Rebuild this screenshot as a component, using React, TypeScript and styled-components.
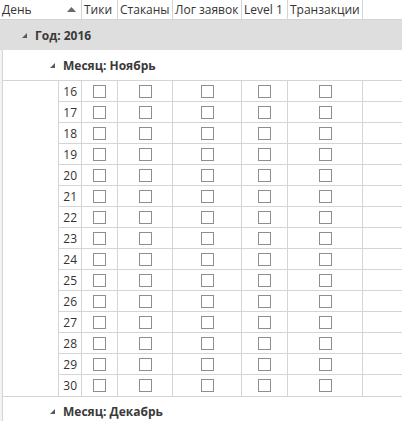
import React from 'react';
import styled, { createGlobalStyle } from 'styled-components';

const GlobalStyle = createGlobalStyle`
    html, body {
        margin: 0;
        padding: 0;
        background: #ffffff;
    }
    body {
        font-family: 'Open Sans', 'Noto Sans', sans-serif;
        font-size: 12px;
        color: #333333;
    }
`;

const LINE = '#d5d5d5';

const columns = [
    { title: 'День', width: 82, sorted: true },
    { title: 'Тики', width: 36 },
    { title: 'Стаканы', width: 55 },
    { title: 'Лог заявок', width: 69 },
    { title: 'Level 1', width: 46 },
    { title: 'Транзакции', width: 75 },
];

const Grid = styled.div`
    width: 402px;
    height: 421px;
    overflow: hidden;
    background: #fff;
`;

const HeaderRow = styled.div`
    display: flex;
    height: 20px;
    box-sizing: border-box;
    border-bottom: 1px solid ${LINE};
`;

const HeaderCell = styled.div<{ $w: number }>`
    width: ${(p) => p.$w}px;
    flex: none;
    box-sizing: border-box;
    border-right: 1px solid ${LINE};
    display: flex;
    align-items: center;
    justify-content: space-between;
    padding: 0 5px 0 2px;
    white-space: nowrap;
    color: #333;
    line-height: 19px;
`;

const SortArrow = styled.svg`
    width: 9px;
    height: 5px;
    margin-right: 0;
`;

const YearRow = styled.div`
    display: flex;
    align-items: center;
    height: 30px;
    background: #dedede;
    padding-left: 22px;
    gap: 8px;
    font-weight: 700;
    color: #3a3a3a;
`;

const GroupBody = styled.div`
    display: flex;
`;

const Stripe = styled.div`
    width: 3px;
    flex: none;
    box-sizing: border-box;
    background: #f3f3f3;
    border-right: 1px solid ${LINE};
`;

const GroupContent = styled.div`
    flex: 1;
`;

const MonthRow = styled.div<{ $top?: boolean }>`
    display: flex;
    align-items: center;
    height: 31px;
    box-sizing: border-box;
    border-bottom: 1px solid ${LINE};
    ${(p) => (p.$top ? `border-top: 1px solid ${LINE};` : '')}
    padding-left: 47px;
    gap: 8px;
    font-weight: 700;
    color: #3a3a3a;
`;

const DataRow = styled.div`
    display: flex;
    height: 21px;
`;

const Indent = styled.div`
    width: 55px;
    flex: none;
`;

const Cells = styled.div`
    display: flex;
    flex: 1;
    border-left: 1px solid ${LINE};
    border-bottom: 1px solid ${LINE};
    ${DataRow}:last-child & {
        border-bottom: none;
    }
`;

const Cell = styled.div<{ $w: number }>`
    width: ${(p) => p.$w}px;
    flex: none;
    box-sizing: border-box;
    border-right: 1px solid ${LINE};
    display: flex;
    align-items: center;
    justify-content: center;
`;

const DayCell = styled(Cell)`
    justify-content: flex-end;
    padding-right: 4px;
    color: #333;
`;

const Box = styled.span`
    width: 13px;
    height: 13px;
    box-sizing: border-box;
    border: 1px solid #8e8e8e;
    background: #fff;
    display: block;
`;

const Expander = () => (
    <svg width="5" height="5" viewBox="0 0 5 5">
        <polygon points="5,0 5,5 0,5" fill="#5a5a5a" />
    </svg>
);

const days = Array.from({ length: 15 }, (_, i) => 16 + i);

export default function App() {
    return (
        <Grid>
            <GlobalStyle />
            <HeaderRow>
                {columns.map((c) => (
                    <HeaderCell key={c.title} $w={c.width}>
                        {c.title}
                        {c.sorted && (
                            <SortArrow viewBox="0 0 9 5">
                                <polygon points="4.5,0 9,5 0,5" fill="#6a6a6a" />
                            </SortArrow>
                        )}
                    </HeaderCell>
                ))}
            </HeaderRow>
            <YearRow>
                <Expander />
                Год: 2016
            </YearRow>
            <GroupBody>
                <Stripe />
                <GroupContent>
                    <MonthRow>
                        <Expander />
                        Месяц: Ноябрь
                    </MonthRow>
                    <div>
                        {days.map((d) => (
                            <DataRow key={d}>
                                <Indent />
                                <Cells>
                                    <DayCell $w={23}>{d}</DayCell>
                                    {columns.slice(1).map((c) => (
                                        <Cell key={c.title} $w={c.width}>
                                            <Box />
                                        </Cell>
                                    ))}
                                </Cells>
                            </DataRow>
                        ))}
                    </div>
                    <MonthRow $top>
                        <Expander />
                        Месяц: Декабрь
                    </MonthRow>
                </GroupContent>
            </GroupBody>
        </Grid>
    );
}
